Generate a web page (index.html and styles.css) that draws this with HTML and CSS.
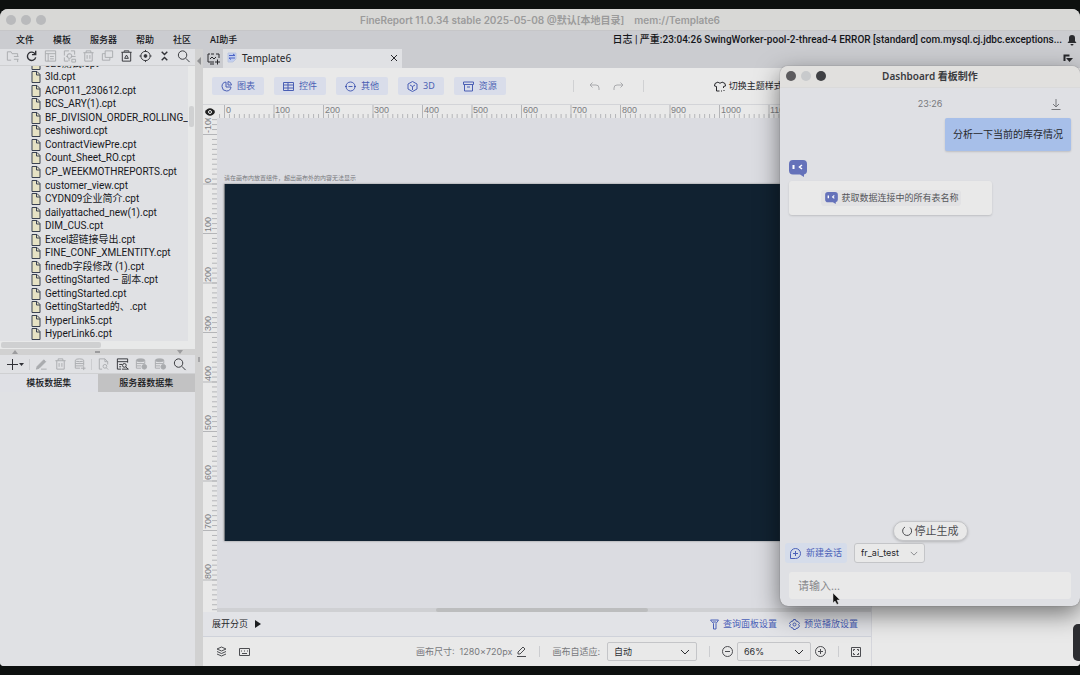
FILE: index.html
```html
<!DOCTYPE html>
<html lang="zh-CN">
  <head>
    <meta charset="utf-8" />
    <title>FineReport</title>
    <link rel="stylesheet" href="styles.css">
  </head>

  <body>
    <div class="app">
      <header class="titlebar">
        <div class="lights"><i></i><i></i><i></i></div>
        <h1>FineReport 11.0.34 stable 2025-05-08 @默认[本地目录] &nbsp;&nbsp; mem://Template6</h1>
      </header>

      <nav class="menubar">
        <a href="#">文件</a>
        <a href="#">模板</a>
        <a href="#">服务器</a>
        <a href="#">帮助</a>
        <a href="#">社区</a>
        <a href="#">AI助手</a>
        <span class="log">日志 | 严重:23:04:26 SwingWorker-pool-2-thread-4 ERROR [standard] com.mysql.cj.jdbc.exceptions...</span>
        <svg class="bell" width="10" height="12" viewBox="0 0 10 12"><path d="M5 1a3 3 0 0 1 3 3v3l1.500 2h-9L2 7V4a3 3 0 0 1 3-3zM3.500 10h3a1.500 1.500 0 0 1-3 0z" /></svg>
      </nav>

      <div class="main">
        <aside class="sidebar">
          <div class="icon-bar">
            <button class="off" aria-label="打开"><svg viewBox="0 0 15 15"><path d="M6 12H2V3h4l1 2h6v3M9 11h5M9 8h5M13 11v3" /></svg></button>
            <button aria-label="刷新"><svg class="bold" viewBox="0 0 15 15"><path d="M11.500 5.500A4.500 4.500 0 1 0 12 9M12 2v4H8" /></svg></button>
            <button class="off" aria-label="模板"><svg viewBox="0 0 15 15"><path d="M2 2h11v11H2zM2 5h11M5 5v8M7 8h4M7 10.500h4" /></svg></button>
            <button class="off" aria-label="设置"><svg viewBox="0 0 15 15"><path d="M2 7V2h5M9 2h4v4M2 9v4h4M7 5v1M7 10v3M4 8h2M9 8h5" /><circle cx="7.500" cy="7.500" r="2.500" /><path d="M10 11h4v3h-4z" /></svg></button>
            <button class="off" aria-label="删除"><svg viewBox="0 0 15 15"><path d="M2 4h11M5 4V2h5v2M3.500 4v9h8V4M6 6.500v4M9 6.500v4" /></svg></button>
            <button class="off" aria-label="复制"><svg viewBox="0 0 15 15"><path d="M5 2h8v7H5zM5 5H2v7h8V9" /></svg></button>
            <button aria-label="回收站"><svg viewBox="0 0 15 15"><path d="M2 3.500h11M5 3V2h5v1M3 3.500V13h9V3.500M5.500 10l2-3.500 2 3.500z" /></svg></button>
            <button aria-label="定位"><svg viewBox="0 0 15 15"><circle cx="7.500" cy="7.500" r="5" /><circle class="fill" cx="7.500" cy="7.500" r="1.500" /><path d="M7.500 1v2M7.500 12v2M1 7.500h2M12 7.500h2" /></svg></button>
            <button aria-label="折叠"><svg class="bold" viewBox="0 0 15 15"><path d="M4.500 3l3 3 3-3M4.500 12l3-3 3 3" /></svg></button>
            <button aria-label="搜索"><svg viewBox="0 0 15 15"><circle cx="6.500" cy="6.500" r="4.500" /><path d="M10 10l4 4" /></svg></button>
          </div>

          <svg class="symbols" width="0" height="0">
            <symbol id="file" viewBox="0 0 10 12"><path d="M1 .5h5l3 3v8H1z" fill="#e6e2c4" stroke="#3b4252" /><path d="M5.500 .5v3.500H9" fill="none" stroke="#3b4252" /></symbol>
            <symbol id="bot" viewBox="0 0 18 17"><path d="M4 0h10a4 4 0 0 1 4 4v6.500a4 4 0 0 1-3 4V17l-4-2.500H4a4 4 0 0 1-4-4V4a4 4 0 0 1 4-4z" fill="#6572ba" /><path d="M4.500 5v4" stroke="#fff" stroke-width="2" /><path d="M13 5l-2.500 2L13 9" stroke="#fff" stroke-width="1.500" fill="none" /></symbol>
            <symbol id="chevron" viewBox="0 0 10 6"><path d="M1 1l4 4 4-4" fill="none" stroke="currentColor" /></symbol>
          </svg>

          <div class="tree">
            <ul>
              <li><svg><use href="#file" /></svg>320测试.cpt</li>
              <li><svg><use href="#file" /></svg>3ld.cpt</li>
              <li><svg><use href="#file" /></svg>ACP011_230612.cpt</li>
              <li><svg><use href="#file" /></svg>BCS_ARY(1).cpt</li>
              <li><svg><use href="#file" /></svg>BF_DIVISION_ORDER_ROLLING_FORECAST.cpt</li>
              <li><svg><use href="#file" /></svg>ceshiword.cpt</li>
              <li><svg><use href="#file" /></svg>ContractViewPre.cpt</li>
              <li><svg><use href="#file" /></svg>Count_Sheet_RO.cpt</li>
              <li><svg><use href="#file" /></svg>CP_WEEKMOTHREPORTS.cpt</li>
              <li><svg><use href="#file" /></svg>customer_view.cpt</li>
              <li><svg><use href="#file" /></svg>CYDN09企业简介.cpt</li>
              <li><svg><use href="#file" /></svg>dailyattached_new(1).cpt</li>
              <li><svg><use href="#file" /></svg>DIM_CUS.cpt</li>
              <li><svg><use href="#file" /></svg>Excel超链接导出.cpt</li>
              <li><svg><use href="#file" /></svg>FINE_CONF_XMLENTITY.cpt</li>
              <li><svg><use href="#file" /></svg>finedb字段修改 (1).cpt</li>
              <li><svg><use href="#file" /></svg>GettingStarted – 副本.cpt</li>
              <li><svg><use href="#file" /></svg>GettingStarted.cpt</li>
              <li><svg><use href="#file" /></svg>GettingStarted的、.cpt</li>
              <li><svg><use href="#file" /></svg>HyperLink5.cpt</li>
              <li><svg><use href="#file" /></svg>HyperLink6.cpt</li>
            </ul>
            <div class="v-track"><i></i></div>
          </div>
          <div class="h-track"><i></i></div>
          <div class="splitter"><i class="up"></i><i class="grip"></i><i class="down"></i></div>

          <div class="icon-bar data-bar">
            <button class="add" aria-label="添加"><svg viewBox="0 0 20 15"><path d="M2 7.500h11M7.500 2v11" /><path class="fill thin" d="M14 6h5l-2.500 3z" /></svg></button>
            <span class="sep"></span>
            <button class="off" aria-label="编辑"><svg viewBox="0 0 15 15"><path class="fill" d="M3 10l7-7 2 2-7 7-3 1z" /><path d="M7 13h6" /></svg></button>
            <button class="off" aria-label="删除"><svg viewBox="0 0 15 15"><path d="M2 4h11M5 4V2h5v2M3.500 4v9h8V4M6 6.500v4M9 6.500v4" /></svg></button>
            <button class="off" aria-label="数据库"><svg viewBox="0 0 15 15"><ellipse cx="7.500" cy="3.500" rx="4.500" ry="1.500" /><path d="M3 4v8h5M12 4v5M3 7h9M3 9.500h9M9 12h5M12 10v4" /></svg></button>
            <span class="sep"></span>
            <button class="off" aria-label="预览"><svg viewBox="0 0 15 15"><path d="M6 13H3V2h6l3 3v3M9 2v3h3" /><circle cx="9" cy="10" r="2" /><path d="M10.500 11.500l2 2" /></svg></button>
            <button aria-label="查询"><svg viewBox="0 0 15 15"><path d="M13 6V2H2v11h4M2 5h11M4 8h3M4 10.500h2" /><circle cx="9.500" cy="9" r="2" /><path d="M11 10.500l2.500 2.500M7 13h7" /></svg></button>
            <button class="off" aria-label="缓存"><svg viewBox="0 0 15 15"><ellipse class="fill" cx="6.500" cy="3.500" rx="4.500" ry="1.500" /><path d="M2 4v8h5M2 7h9M2 9.500h5M11 4v3" /><circle class="fill" cx="10.500" cy="10.500" r="2.500" /></svg></button>
            <button class="off" aria-label="同步"><svg viewBox="0 0 15 15"><ellipse class="fill" cx="6.500" cy="3.500" rx="4.500" ry="1.500" /><path d="M2 4v8h5M2 7h9M2 9.500h5M11 4v3" /><circle class="fill" cx="10.500" cy="10.500" r="2.500" /></svg></button>
            <button aria-label="搜索"><svg viewBox="0 0 15 15"><circle cx="6.500" cy="6.500" r="4.500" /><path d="M10 10l4 4" /></svg></button>
          </div>
          <div class="data-tabs">
            <button class="active">模板数据集</button>
            <button>服务器数据集</button>
          </div>
        </aside>

        <div class="divider"><i></i><b></b></div>

        <div class="content">
          <div class="tabs">
            <button class="new-tab" aria-label="新建"><svg width="13" height="12" viewBox="0 0 13 12"><path d="M3 1H1v8h6M4 1h3M9 1h3v4M3 6l2-2 2 2 2-2M8 9h5M10.500 6.500v5M3 11h4" /></svg></button>
            <div class="tab">
              <svg width="10" height="11" viewBox="0 0 10 11"><path class="paper" d="M1 1h8v6l-3 3H1z" /><path class="mark" d="M2 3.500h6M2 6h6M6 2l2 1.500M4 7.500L2 6" /></svg>
              <span>Template6</span>
              <button aria-label="关闭"><svg width="8" height="8" viewBox="0 0 8 8"><path d="M1 1l6 6M7 1L1 7" /></svg></button>
            </div>
            <svg class="corner" width="10" height="10" viewBox="0 0 10 10"><path d="M1.500 7V1.500h5" /><path class="fill" d="M3 4h7L6.500 8z" /></svg>
          </div>

          <div class="panes">
            <section class="designer">
              <div class="toolbar">
                <button class="tool"><svg viewBox="0 0 11 11"><path d="M5 1a4.500 4.500 0 1 0 5 5H5zM7 .5A4 4 0 0 1 10.500 4H7z" /></svg>图表</button>
                <button class="tool"><svg viewBox="0 0 11 11"><path d="M.5 1.500h10v8H.5zM.5 4h10M.5 7h10M5 1.500v8" /></svg>控件</button>
                <button class="tool"><svg viewBox="0 0 11 11"><circle cx="5.500" cy="5.500" r="4.500" /><path d="M0 5.500h2M3.500 5.500h4M9 5.500h2" /></svg>其他</button>
                <button class="tool"><svg viewBox="0 0 11 11"><path d="M5.500 .5l4.500 2.500v5l-4.500 2.500L1 8V3zM3 4l2.500 1.500L8 4M5.500 5.500V9" /></svg>3D</button>
                <button class="tool"><svg viewBox="0 0 11 11"><path d="M.5 1h10v2.500H.5zM1.500 3.500V10h8V3.500M4 6h3" /></svg>资源</button>
                <div class="history">
                  <button aria-label="撤销"><svg width="11" height="9" viewBox="0 0 11 9"><path d="M3.500 .5L1 3l2.500 2.500M1 3h6a3 3 0 0 1 3 3v2" /></svg></button>
                  <button aria-label="重做"><svg width="11" height="9" viewBox="0 0 11 9"><path d="M7.500 .5L10 3 7.500 5.500M10 3H4a3 3 0 0 0-3 3v2" /></svg></button>
                </div>
                <button class="theme"><svg width="12" height="11" viewBox="0 0 12 11"><path d="M4 1L1 2.500 .5 5l2 .5V10h3M4 1c1 1.500 3 1.500 4 0l3 1.500L11.500 5l-2 .5V7M7 10h1M10 9v1" /></svg>切换主题样式</button>
              </div>

              <div class="workspace">
                <div class="eye"><svg width="10" height="8" viewBox="0 0 10 8"><path d="M0 4c2-5 8-5 10 0-2 5-8 5-10 0z" fill="#222" /><circle cx="5" cy="4" r="1.500" fill="none" stroke="#eee" /></svg></div>
                <svg class="ruler ruler-x" width="100%" height="13">
                  <defs>
                    <pattern id="tx" x="7" width="4.950" height="13" patternUnits="userSpaceOnUse"><path d="M.5 9v4" /></pattern>
                    <pattern id="mx" x="7" width="49.500" height="13" patternUnits="userSpaceOnUse"><path d="M.5 0v13" /></pattern>
                  </defs>
                  <rect width="100%" height="13" fill="url(#tx)" />
                  <rect width="100%" height="13" fill="url(#mx)" />
                  <text x="9" y="8">0</text>
                  <text x="58" y="8">100</text>
                  <text x="108" y="8">200</text>
                  <text x="157" y="8">300</text>
                  <text x="207" y="8">400</text>
                  <text x="256" y="8">500</text>
                  <text x="306" y="8">600</text>
                  <text x="355" y="8">700</text>
                  <text x="405" y="8">800</text>
                  <text x="454" y="8">900</text>
                  <text x="504" y="8">1000</text>
                  <text x="553" y="8">1100</text>
                  <text x="603" y="8">1200</text>
                </svg>
                <svg class="ruler ruler-y" width="14" height="100%">
                  <defs>
                    <pattern id="ty" y="16" width="14" height="4.950" patternUnits="userSpaceOnUse"><path d="M9 .5h5" /></pattern>
                    <pattern id="my" y="16" width="14" height="49.500" patternUnits="userSpaceOnUse"><path d="M0 .5h14" /></pattern>
                  </defs>
                  <rect width="14" height="100%" fill="url(#ty)" />
                  <rect width="14" height="100%" fill="url(#my)" />
                  <text transform="translate(8 15) rotate(-90)">-100</text>
                  <text transform="translate(8 65) rotate(-90)">0</text>
                  <text transform="translate(8 114) rotate(-90)">100</text>
                  <text transform="translate(8 164) rotate(-90)">200</text>
                  <text transform="translate(8 213) rotate(-90)">300</text>
                  <text transform="translate(8 263) rotate(-90)">400</text>
                  <text transform="translate(8 312) rotate(-90)">500</text>
                  <text transform="translate(8 362) rotate(-90)">600</text>
                  <text transform="translate(8 411) rotate(-90)">700</text>
                  <text transform="translate(8 461) rotate(-90)">800</text>
                </svg>
                <div class="stage">
                  <p>请在画布内放置组件，超出画布外的内容无法显示</p>
                  <div class="board"></div>
                </div>
                <div class="stage-scroll"><i></i></div>
              </div>

              <div class="pages">
                <button class="expand">展开分页<i></i></button>
                <a href="#"><svg width="9" height="11" viewBox="0 0 9 11"><path d="M.5 1h8L6 4.500V10H3.500V4.500zM3 3h3" /></svg>查询面板设置</a>
                <a href="#"><svg width="11" height="11" viewBox="0 0 11 11"><path d="M4.500 .5h2l.5 1.500 2 .5 1.500 2-1 1 1 1.500-1.500 2-2 .5-.5 1h-2L4 9l-2-.5L.5 7l1-1.500-1-1 1.500-2L4 2z" /><circle cx="5.500" cy="5.500" r="1.500" /></svg>预览播放设置</a>
              </div>

              <footer class="status">
                <button aria-label="图层"><svg width="11" height="11" viewBox="0 0 11 11"><path d="M5.500 1l4.500 2-4.500 2L1 3zM1 5.500l4.500 2 4.500-2M1 8l4.500 2L10 8" /></svg></button>
                <button aria-label="键盘"><svg width="11" height="8" viewBox="0 0 11 8"><path d="M.5 .5h10v7H.5zM2 3h1M5 3h1M8 3h1M3 5.500h5" /></svg></button>
                <span class="size">画布尺寸: &nbsp;1280×720px</span>
                <button aria-label="编辑尺寸"><svg width="11" height="11" viewBox="0 0 11 11"><path d="M2 8V6l5-5 2 2-5 5zM1 10.500h9" /></svg></button>
                <span class="sep"></span>
                <label for="fit">画布自适应:</label>
                <div class="select fit">
                  <select id="fit"><option>自动</option></select>
                  <svg width="10" height="6"><use href="#chevron" /></svg>
                </div>
                <span class="sep"></span>
                <div class="zoom">
                  <button aria-label="缩小"><svg width="11" height="11" viewBox="0 0 11 11"><circle cx="5.500" cy="5.500" r="5" /><path d="M3 5.500h5" /></svg></button>
                  <div class="select">
                    <select aria-label="缩放"><option>66%</option></select>
                    <svg width="10" height="6"><use href="#chevron" /></svg>
                  </div>
                  <button aria-label="放大"><svg width="11" height="11" viewBox="0 0 11 11"><circle cx="5.500" cy="5.500" r="5" /><path d="M3 5.500h5M5.500 3v5" /></svg></button>
                </div>
                <span class="sep"></span>
                <button aria-label="全屏"><svg width="10" height="10" viewBox="0 0 10 10"><path d="M.5 .5h9v9h-9zM2.500 4V2.500H4M6 2.500h1.500V4M7.500 6v1.500H6M4 7.500H2.500V6" /></svg></button>
              </footer>
            </section>
            <section class="props"></section>
          </div>
        </div>
      </div>
    </div>

    <!-- AI assistant window -->
    <div class="dialog">
      <header class="dialog-title">
        <div class="lights"><i></i><i></i><i></i></div>
        <h2>Dashboard 看板制作</h2>
      </header>
      <div class="chat">
        <div class="chat-head">
          <time>23:26</time>
          <button aria-label="下载"><svg width="10" height="12" viewBox="0 0 10 12"><path d="M5 1v8M2 6l3 3 3-3M.5 11.500h9" /></svg></button>
        </div>
        <p class="bubble">分析一下当前的库存情况</p>
        <svg class="avatar" width="18" height="17"><use href="#bot" /></svg>
        <div class="card">
          <span><svg width="13" height="12" viewBox="0 0 13 12"><use href="#bot" /></svg>获取数据连接中的所有表名称</span>
        </div>
      </div>
      <button class="stop"><svg width="10" height="10" viewBox="0 0 10 10"><path d="M3 1a4.500 4.500 0 1 0 5 .5" /></svg>停止生成</button>
      <div class="chat-actions">
        <button class="new-chat"><svg width="11" height="11" viewBox="0 0 11 11"><path d="M.5 10.500V5.500a5 5 0 1 1 5 5zM3 5.500h5M5.500 3v5" /></svg>新建会话</button>
        <div class="select">
          <select aria-label="数据连接"><option>fr_ai_test</option></select>
          <svg width="8" height="5"><use href="#chevron" /></svg>
        </div>
      </div>
      <input class="prompt" type="text" placeholder="请输入..." aria-label="请输入" />
    </div>
    <div class="side-handle"></div>
    <svg class="cursor" width="9" height="13" viewBox="0 0 9 13"><path d="M1 1v10l2-2 2 3.500 1.500-1L5 8h3z" fill="#111" stroke="#ddd" stroke-width=".5" /></svg>
  </body>
</html>
```
FILE: styles.css
```css
* {
  box-sizing: border-box;
}

body {
  display: flex;
  height: 100vh;
  margin: 0;
  padding: 9px 0;
  overflow: hidden;
  background-color: #0d100f;
  font-family: "Noto Sans", "Noto Sans CJK SC", sans-serif;
  font-size: 9px;
  line-height: 12px;
  color: #26272b;
}

h1,
h2,
p,
ul {
  margin: 0;
  padding: 0;
}

button,
input,
select {
  margin: 0;
  padding: 0;
  border: none;
  background: none;
  font: inherit;
  color: inherit;
}

a {
  color: inherit;
  text-decoration: none;
}

button {
  display: flex;
  align-items: center;
  justify-content: center;
}

svg {
  flex: none;
  fill: none;
  stroke: currentColor;
}

svg .fill {
  fill: currentColor;
}

.symbols {
  position: absolute;
}

.app {
  display: flex;
  flex: 1;
  flex-direction: column;
  min-width: 0;
  border-radius: 8px 8px 4px 4px;
  overflow: hidden;
  background-color: #cbccd0;
}

/* title bar and menu */
.titlebar,
.dialog-title {
  display: grid;
  grid-template-columns: 1fr auto 1fr;
  align-items: center;
  height: 22px;
  padding: 0 6px;
  background-color: #d8d8d6;
  border-bottom: 1px solid #c6c6c8;
}

.titlebar h1 {
  font-family: Inter, "Noto Sans CJK SC", sans-serif;
  font-size: 10px;
  font-weight: 600;
  color: #9b9b9b;
}

.lights {
  display: flex;
  gap: 5px;
}

.lights i {
  width: 10px;
  height: 10px;
  border-radius: 50%;
  background-color: #b9babc;
}

.menubar {
  display: flex;
  align-items: center;
  gap: 19px;
  height: 18px;
  padding: 0 3px 1px 16px;
  font-weight: 500;
  color: #15161a;
}

.log {
  margin-left: auto;
  font-family: Roboto, "Noto Sans CJK SC", sans-serif;
  font-size: 10px;
  white-space: nowrap;
}

.bell {
  margin-left: -14px;
  fill: #2a2b2f;
  stroke: none;
}

.main {
  display: flex;
  flex: 1;
  min-height: 0;
}

/* left panel */
.sidebar {
  display: flex;
  flex: none;
  flex-direction: column;
  width: 195px;
  background-color: #e0e1e4;
}

.icon-bar {
  display: flex;
  align-items: center;
  gap: 4px;
  height: 17px;
  padding: 0 5px 2px;
  border-bottom: 1px solid #cfd0d2;
  color: #303136;
}

.icon-bar svg {
  width: 15px;
  height: 14px;
}

.icon-bar .bold {
  stroke-width: 1.5;
}

.icon-bar .thin {
  stroke: none;
}

.off {
  color: #a9abae;
}

.tree {
  display: flex;
  height: 275px;
  overflow: hidden;
}

.tree ul {
  display: flex;
  flex: 1;
  flex-direction: column;
  align-self: flex-end;
  min-width: 0;
  height: 284px;
  padding-left: 31px;
  overflow: hidden;
  list-style: none;
  font-family: Roboto, "Noto Sans CJK SC", sans-serif;
  font-size: 10px;
  color: #17181c;
}

.tree li {
  display: flex;
  flex: 1;
  align-items: center;
  gap: 4px;
  min-height: 0;
  white-space: nowrap;
}

.tree li svg {
  width: 10px;
  height: 12px;
}

.v-track {
  width: 7px;
  padding: 40px 1px 0;
  background-color: #e8e9e9;
}

.v-track i {
  display: block;
  height: 21px;
  border-radius: 2px;
  background-color: #d0d1d2;
}

.h-track {
  height: 8px;
  padding: 1px;
  background-color: #e8e9e9;
}

.h-track i {
  display: block;
  width: 52%;
  height: 6px;
  border-radius: 2px;
  background-color: #cfd0d1;
}

.splitter {
  display: flex;
  align-items: center;
  justify-content: space-between;
  height: 6px;
  padding: 0 12px;
  background-color: #d1d1d1;
}

.splitter i {
  border: 3px solid transparent;
}

.splitter .up {
  border-top: none;
  border-bottom: 4px solid #9c9c9e;
}

.splitter .down {
  border-bottom: none;
  border-top: 4px solid #9c9c9e;
}

.splitter .grip {
  width: 5px;
  height: 2px;
  border: none;
  background-color: #9c9c9e;
}

.data-bar {
  height: 19px;
  padding: 0 5px;
}

.data-bar .add svg {
  width: 20px;
  height: 15px;
}

.sep {
  width: 1px;
  height: 11px;
  background-color: #cccdd0;
}

.data-tabs {
  display: flex;
  height: 18px;
}

.data-tabs button {
  flex: 1;
  background-color: #c2c2c3;
  font-weight: 500;
  color: #15161a;
}

.data-tabs .active {
  background-color: #dfe0e5;
}

.divider {
  display: flex;
  flex: none;
  flex-direction: column;
  align-items: center;
  gap: 292px;
  width: 8px;
  padding-top: 8px;
  background-color: #d1d1d1;
}

.divider i {
  border: 4px solid transparent;
  border-left: none;
  border-right: 4px solid #8f9092;
}

.divider b {
  width: 2px;
  height: 5px;
  background-color: #a5a5a7;
}

/* template tabs */
.content {
  display: flex;
  flex: 1;
  flex-direction: column;
  min-width: 0;
}

.tabs {
  display: flex;
  align-items: stretch;
  height: 19px;
  padding-right: 7px;
}

.new-tab {
  width: 20px;
}

.tab {
  display: flex;
  align-items: center;
  gap: 5px;
  width: 179px;
  padding: 0 4px 2px;
  background-color: #e0e1e4;
  font-size: 10px;
}

.tab button {
  margin-left: auto;
}

.tab .paper {
  fill: #c3cff0;
  stroke: #bcc6de;
}

.tab .mark {
  stroke: #4c63c4;
}

.corner {
  align-self: center;
  margin-left: auto;
  stroke-width: 2;
}

.corner .fill {
  stroke: none;
}

.panes {
  display: flex;
  flex: 1;
  min-height: 0;
}

.designer {
  display: flex;
  flex: 1;
  flex-direction: column;
  min-width: 0;
}

.props {
  width: 209px;
  border-left: 1px solid #d5d6dc;
  background-color: #e9e9e9;
}

.toolbar {
  display: flex;
  align-items: center;
  gap: 10px;
  height: 36px;
  padding: 0 9px;
  background-color: #e9e9e9;
  white-space: nowrap;
}

.tool {
  gap: 5px;
  height: 18px;
  padding: 0 9px;
  border-radius: 2px;
  background-color: #d9ddea;
  color: #4a5fb4;
}

.tool svg {
  width: 11px;
  height: 11px;
}

.history {
  display: flex;
  align-items: center;
  gap: 13px;
  height: 12px;
  margin: 0 60px 0 57px;
  padding: 0 19px 0 15px;
  border-left: 1px solid #d0d1d3;
  border-right: 1px solid #d0d1d3;
  color: #a9aaad;
}

.theme {
  gap: 3px;
}

/* rulers and canvas */
.workspace {
  display: grid;
  flex: 1;
  grid-template-columns: 14px 1fr;
  grid-template-rows: 13px 1fr 4px;
  min-height: 0;
  border-top: 1px solid #d3d4d8;
  background-color: #dbdce1;
}

.eye {
  display: flex;
  align-items: center;
  justify-content: center;
  background-color: #e9e9e9;
}

.eye svg,
.select svg,
.avatar,
.card svg {
  stroke: none;
}

.ruler {
  background-color: #e9e9e9;
  stroke: none;
}

.ruler path {
  stroke: #b4b5b8;
}

.ruler text {
  font-family: "Liberation Sans", Arial, sans-serif;
  font-size: 9px;
  fill: #7c7d81;
}

.ruler-y {
  grid-row: 2 / 4;
}

.stage {
  min-width: 0;
  padding: 54px 0 0 7px;
  overflow: hidden;
}

.stage p {
  font-size: 6px;
  color: #77787c;
}

.board {
  width: 634px;
  height: 357px;
  border-left: 1px solid #777b80;
  background-color: #112231;
  box-shadow: 0 0 2px #888;
}

.stage-scroll {
  padding-left: 219px;
  background-color: #cfd0d3;
}

.stage-scroll i {
  display: block;
  width: 212px;
  height: 4px;
  border-radius: 2px;
  background-color: #bcbdbe;
}

.pages {
  display: flex;
  align-items: center;
  gap: 12px;
  height: 25px;
  padding: 0 13px 0 9px;
  border-bottom: 1px solid #cfd2da;
  background-color: #e2e3e7;
}

.pages .expand {
  gap: 7px;
  margin-right: auto;
}

.expand i {
  border: 4px solid transparent;
  border-right: none;
  border-left: 6px solid #1c1d20;
}

.pages a {
  display: flex;
  align-items: center;
  gap: 4px;
  color: #4a60b8;
}

.status {
  display: flex;
  align-items: center;
  gap: 12px;
  height: 29px;
  padding: 0 10px 0 13px;
  background-color: #e9e9e9;
  font-family: Inter, "Noto Sans CJK SC", sans-serif;
  white-space: nowrap;
  color: #4c4d51;
}

.status .size {
  margin-left: auto;
  color: #77787c;
}

.status .size + button {
  margin-left: -8px;
}

.status label {
  margin-right: -5px;
  color: #77787c;
}

.select {
  display: grid;
  align-items: center;
  border: 1px solid #c4c5c8;
  border-radius: 2px;
}

.select select {
  grid-area: 1 / 1;
  width: 100%;
  height: 17px;
  padding-left: 6px;
  appearance: none;
}

.select svg {
  grid-area: 1 / 1;
  justify-self: end;
  margin-right: 6px;
  pointer-events: none;
}

.status .select {
  width: 74px;
  color: #2d2e32;
}

.status .fit {
  width: 90px;
}

.zoom {
  display: flex;
  align-items: center;
  gap: 4px;
}

/* floating assistant */
.dialog {
  position: absolute;
  top: 66px;
  right: 0;
  display: flex;
  flex-direction: column;
  width: 300px;
  height: 540px;
  padding-bottom: 7px;
  border-radius: 8px;
  overflow: hidden;
  background-color: #dfe0e4;
  box-shadow: 0 0 1px #555, 0 8px 24px rgba(0, 0, 0, 0.5);
}

.dialog-title {
  padding-bottom: 2px;
  background-color: #e1e0de;
  border-color: #dadada;
}

.dialog-title h2 {
  font-size: 10px;
  font-weight: 600;
  color: #3a3b3e;
}

.dialog-title .lights i {
  background-color: #5c5b5e;
}

.dialog-title .lights i:nth-child(2) {
  background-color: #c8cacc;
}

.dialog-title .lights i:nth-child(3) {
  background-color: #3f4044;
}

.chat {
  display: flex;
  flex: 1;
  flex-direction: column;
  align-items: flex-start;
  padding: 9px;
}

.chat-head {
  display: grid;
  grid-template-columns: 1fr auto 1fr;
  align-items: center;
  width: 100%;
  height: 14px;
  padding: 0 10px;
  color: #77787c;
}

.chat-head time {
  grid-column: 2;
  font-family: Inter, sans-serif;
}

.chat-head button {
  justify-self: end;
}

.bubble {
  align-self: flex-end;
  margin: 7px 0 9px;
  padding: 10px 8px 11px;
  border-radius: 2px;
  background-color: #a7bfe9;
  box-shadow: 0 1px 2px rgba(0, 0, 0, 0.15);
  font-size: 10px;
}

.card {
  display: flex;
  align-items: center;
  justify-content: center;
  width: 72%;
  height: 34px;
  margin-top: 4px;
  border-radius: 3px;
  background-color: #e9e9e9;
  box-shadow: 0 1px 2px rgba(0, 0, 0, 0.15);
  color: #55565a;
}

.card span {
  display: flex;
  align-items: center;
  gap: 4px;
  height: 16px;
  padding: 0 2px 0 4px;
  border-radius: 3px;
  background-color: #e2e2e4;
}

.stop {
  align-self: center;
  gap: 3px;
  height: 20px;
  padding: 0 8px;
  border: 1px solid #c4c5c8;
  border-radius: 10px;
  background-color: #e9e9e9;
  box-shadow: 0 1px 3px rgba(0, 0, 0, 0.2);
  font-size: 11px;
  color: #4c4d51;
}

.chat-actions {
  display: flex;
  gap: 7px;
  margin: 2px 5px 9px;
}

.new-chat {
  gap: 5px;
  width: 62px;
  height: 20px;
  border-radius: 3px;
  background-color: #d5dcea;
  color: #4a60b8;
}

.chat-actions .select {
  width: 71px;
  height: 20px;
  border-radius: 3px;
  background-color: #e9e9e9;
  font-family: Inter, sans-serif;
}

.chat-actions .select svg {
  color: #77787c;
}

.prompt {
  height: 27px;
  margin: 0 9px;
  padding: 0 9px;
  border-radius: 3px;
  background-color: #e9e9e9;
  font-size: 11px;
}

.prompt::placeholder {
  color: #86878b;
}

.side-handle {
  position: absolute;
  top: 624px;
  right: 0;
  width: 7px;
  height: 37px;
  border-radius: 5px 0 0 5px;
  background-color: #2c2d31;
}

.cursor {
  position: absolute;
  top: 592px;
  left: 832px;
}
```
